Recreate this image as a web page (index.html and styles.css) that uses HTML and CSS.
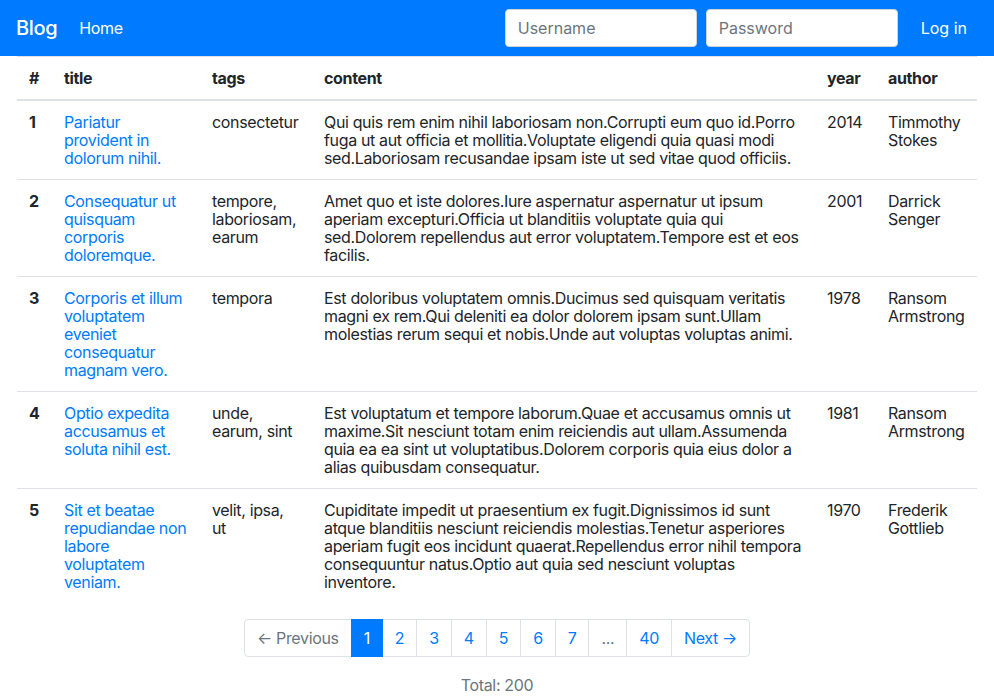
FILE: index.html
```html
<!DOCTYPE html>
<html>
<head>
<meta charset="utf-8">
<link rel="stylesheet" href="styles.css">
</head>
<body>
<nav class="navbar">
  <a class="brand" href="#">Blog</a>
  <a class="nav-link" href="#">Home</a>
  <form class="login">
    <input class="form-control" type="text" placeholder="Username">
    <input class="form-control" type="password" placeholder="Password">
    <button class="btn-link" type="button">Log in</button>
  </form>
</nav>
<main class="container">
  <table class="table">
    <colgroup>
      <col class="c-num"><col class="c-title"><col class="c-tags"><col class="c-content"><col class="c-year"><col class="c-author">
    </colgroup>
    <thead>
      <tr><th>#</th><th>title</th><th>tags</th><th>content</th><th>year</th><th>author</th></tr>
    </thead>
    <tbody>
      <tr><th>1</th><td><a href="#">Pariatur provident in dolorum nihil.</a></td><td>consectetur</td><td>Qui quis rem enim nihil laboriosam non.Corrupti eum quo id.Porro fuga ut aut officia et mollitia.Voluptate eligendi quia quasi modi sed.Laboriosam recusandae ipsam iste ut sed vitae quod officiis.</td><td>2014</td><td>Timmothy Stokes</td></tr>
      <tr><th>2</th><td><a href="#">Consequatur ut quisquam corporis doloremque.</a></td><td>tempore, laboriosam, earum</td><td>Amet quo et iste dolores.Iure aspernatur aspernatur ut ipsum aperiam excepturi.Officia ut blanditiis voluptate quia qui sed.Dolorem repellendus aut error voluptatem.Tempore est et eos facilis.</td><td>2001</td><td>Darrick Senger</td></tr>
      <tr><th>3</th><td><a href="#">Corporis et illum voluptatem eveniet consequatur magnam vero.</a></td><td>tempora</td><td>Est doloribus voluptatem omnis.Ducimus sed quisquam veritatis magni ex rem.Qui deleniti ea dolor dolorem ipsam sunt.Ullam molestias rerum sequi et nobis.Unde aut voluptas voluptas animi.</td><td>1978</td><td>Ransom Armstrong</td></tr>
      <tr><th>4</th><td><a href="#">Optio expedita accusamus et soluta nihil est.</a></td><td>unde, earum, sint</td><td>Est voluptatum et tempore laborum.Quae et accusamus omnis ut maxime.Sit nesciunt totam enim reiciendis aut ullam.Assumenda quia ea ea sint ut voluptatibus.Dolorem corporis quia eius dolor a alias quibusdam consequatur.</td><td>1981</td><td>Ransom Armstrong</td></tr>
      <tr><th>5</th><td><a href="#">Sit et beatae repudiandae non labore voluptatem veniam.</a></td><td>velit, ipsa, ut</td><td>Cupiditate impedit ut praesentium ex fugit.Dignissimos id sunt atque blanditiis nesciunt reiciendis molestias.Tenetur asperiores aperiam fugit eos incidunt quaerat.Repellendus error nihil tempora consequuntur natus.Optio aut quia sed nesciunt voluptas inventore.</td><td>1970</td><td>Frederik Gottlieb</td></tr>
    </tbody>
  </table>
  <ul class="pagination">
    <li class="page-item disabled"><span class="page-link">← Previous</span></li>
    <li class="page-item active"><span class="page-link">1</span></li>
    <li class="page-item"><a class="page-link" href="#">2</a></li>
    <li class="page-item"><a class="page-link" href="#">3</a></li>
    <li class="page-item"><a class="page-link" href="#">4</a></li>
    <li class="page-item"><a class="page-link" href="#">5</a></li>
    <li class="page-item"><a class="page-link" href="#">6</a></li>
    <li class="page-item"><a class="page-link" href="#">7</a></li>
    <li class="page-item disabled"><span class="page-link">...</span></li>
    <li class="page-item"><a class="page-link" href="#">40</a></li>
    <li class="page-item"><a class="page-link" href="#">Next →</a></li>
  </ul>
  <p class="total">Total: 200</p>
</main>
</body>
</html>
```
FILE: styles.css
```css
* { box-sizing: border-box; }
body {
  margin: 0;
  font-family: Inter, "Liberation Sans", sans-serif;
  font-size: 16px;
  line-height: 18px;
  letter-spacing: -0.35px;
  color: #212529;
  background: #fff;
}
a { color: #007bff; text-decoration: none; }
.navbar {
  height: 56px;
  background: #007bff;
  display: flex;
  align-items: center;
  padding: 0 16px;
}
.brand {
  color: #fff;
  font-size: 20px;
  font-weight: 500;
  margin-right: 14px;
}
.nav-link {
  color: #fff;
  padding: 0 8px;
}
.login {
  margin-left: auto;
  display: flex;
  align-items: center;
  gap: 9px;
}
.form-control {
  width: 192px;
  height: 38px;
  padding: 6px 12px;
  font: inherit;
  font-size: 16px;
  color: #495057;
  background: #fff;
  border: 1px solid #ced4da;
  border-radius: 4px;
}
.form-control::placeholder { color: #6c757d; }
.btn-link {
  font: inherit;
  font-size: 16px;
  color: #fff;
  background: none;
  border: 0;
  padding: 6px 12px;
  margin-left: 2px;
  margin-right: -1px;
}
.container {
  width: 960px;
  margin: 0 auto;
}
.table {
  width: 100%;
  table-layout: fixed;
  border-collapse: collapse;
  margin-bottom: 16px;
}
.c-num { width: 35px; }
.c-title { width: 148px; }
.c-tags { width: 112px; }
.c-content { width: 503px; }
.c-year { width: 61px; }
.c-author { width: 101px; }
.table th, .table td {
  padding: 12px;
  vertical-align: top;
  text-align: left;
  border-top: 1px solid #dee2e6;
}
.table thead th {
  border-bottom: 2px solid #dee2e6;
  font-weight: 700;
}
.table tbody th { font-weight: 700; }
.table thead + tbody tr:first-child > * { border-top: 0; }
.pagination {
  list-style: none;
  display: flex;
  justify-content: center;
  margin: 0;
  padding: 0;
}
.page-link {
  display: block;
  padding: 8px 12px;
  line-height: 20px;
  border: 1px solid #dee2e6;
  margin-left: -1px;
  color: #007bff;
  background: #fff;
}
.page-item:first-child .page-link { margin-left: 0; border-radius: 4px 0 0 4px; }
.page-item:last-child .page-link { border-radius: 0 4px 4px 0; }
.page-item.disabled .page-link { color: #6c757d; }
.page-item.active .page-link {
  background: #007bff;
  border-color: #007bff;
  color: #fff;
  position: relative;
}
.total {
  text-align: center;
  color: #6c757d;
  margin: 19px 0 0;
}
```
